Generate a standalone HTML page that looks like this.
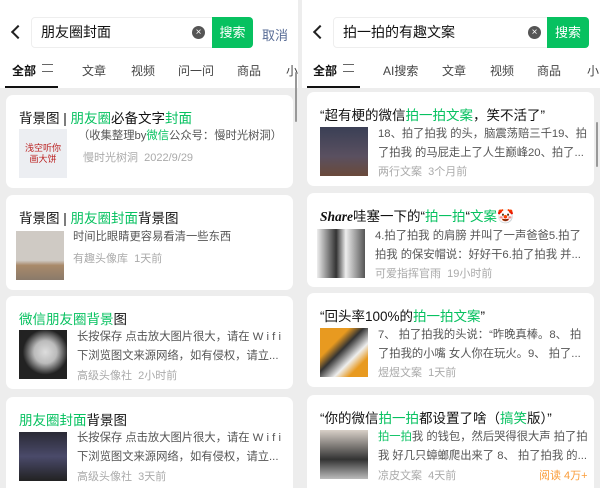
<!DOCTYPE html>
<html><head><meta charset="utf-8"><style>
*{margin:0;padding:0;box-sizing:border-box}
body{width:600px;height:488px;overflow:hidden;background:#ededed;font-family:"Liberation Sans","Noto Sans CJK SC",sans-serif;position:relative}
.p{position:absolute;top:0;height:488px;background:#ededed;overflow:hidden}
.hd{position:absolute;left:0;top:0;width:100%;height:88px;background:#fff}
.back{position:absolute;left:12px;top:27px;width:10px;height:10px;border-left:2px solid #222;border-bottom:2px solid #222;transform:rotate(45deg)}
.sb{position:absolute;top:17px;height:31px;background:#fff;border:1px solid #eee;border-radius:4px;font-size:14px;color:#111;line-height:29px;padding-left:9px}
.x{position:absolute;top:8px;width:13px;height:13px;border-radius:50%;background:#555;color:#fff;font-size:10px;line-height:13px;text-align:center}
.btn{position:absolute;top:17px;height:31px;background:#07c160;color:#fff;font-size:13px;line-height:31px;text-align:center;border-radius:0 4px 4px 0}
.tabs{position:absolute;top:62px;left:0;width:100%;font-size:12px;color:#444;white-space:nowrap}
.tabs span{position:absolute}
.ul{position:absolute;top:86px;height:2px;width:53px;background:#111}
.card{position:absolute;background:#fff;border-radius:7px}
.t{position:absolute;left:13px;top:12px;font-size:13.5px;color:#111;white-space:nowrap}
.g{color:#07c160}
.img{position:absolute;left:13px;width:48px;height:49px}
.d{position:absolute;left:71px;width:210px;font-size:11.3px;color:#555;line-height:19px;white-space:nowrap}
.d div{overflow:hidden;width:210px;text-overflow:ellipsis}
.m{position:absolute;left:71px;font-size:11px;color:#aaa;white-space:nowrap}
.scr{position:absolute;width:2px;background:#999;border-radius:1px}
.fl{display:inline-block;width:11px;height:8px;border-top:1.5px solid #666;border-bottom:1.5px solid #666;position:relative;top:-1px}
</style></head><body>
<div class="p" style="left:0;width:298px">
 <div class="hd"></div>
 <div class="back" style="left:13px"></div>
 <div class="sb" style="left:31px;width:190px">朋友圈封面<div class="x" style="left:160px">×</div></div>
 <div class="btn" style="left:212px;width:41px">搜索</div>
 <div style="position:absolute;left:262px;top:25px;font-size:13px;color:#576b95">取消</div>
 <div class="tabs"><span style="left:12px;color:#111;font-weight:bold">全部</span><span style="left:42px"><i class="fl"></i></span><span style="left:82px">文章</span><span style="left:131px">视频</span><span style="left:178px">问一问</span><span style="left:237px">商品</span><span style="left:286px">小</span></div>
 <div class="ul" style="left:5px"></div>
 <div class="scr" style="left:295px;top:72px;height:50px"></div>
 <div class="card" style="left:6px;top:95px;width:287px;height:93px">
  <div class="t">背景图 | <span class="g">朋友圈</span>必备文字<span class="g">封面</span></div>
  <div class="img" style="top:34px;background:#eceef2;color:#b22;font-size:9px;text-align:center;padding-top:14px;line-height:11px">浅空听你<br>画大饼</div>
  <div class="d" style="top:32px;left:72px">（收集整理by<span class="g">微信</span>公众号：慢时光树洞）</div>
  <div class="m" style="top:54px;left:77px">慢时光树洞&nbsp;&nbsp;2022/9/29</div>
 </div>
 <div class="card" style="left:6px;top:195px;width:287px;height:95px">
  <div class="t" style="top:12px">背景图 | <span class="g">朋友圈封面</span>背景图</div>
  <div class="img" style="top:36px;left:10px;background:linear-gradient(#cfcac4 60%,#a98a6a 70%,#8a7a6a)"></div>
  <div class="d" style="top:33px;left:67px">时间比眼睛更容易看清一些东西</div>
  <div class="m" style="top:55px;left:67px">有趣头像库&nbsp;&nbsp;1天前</div>
 </div>
 <div class="card" style="left:6px;top:296px;width:287px;height:93px">
  <div class="t"><span class="g">微信朋友圈背景</span>图</div>
  <div class="img" style="top:34px;background:radial-gradient(circle at 55% 45%,#ddd 0,#bbb 30%,#222 60%)"></div>
  <div class="d" style="top:32px"><div>长按保存 点击放大图片很大，请在 W i f i</div><div>下浏览图文来源网络，如有侵权，请立...</div></div>
  <div class="m" style="top:71px">高级头像社&nbsp;&nbsp;2小时前</div>
 </div>
 <div class="card" style="left:6px;top:397px;width:287px;height:100px">
  <div class="t"><span class="g">朋友圈封面</span>背景图</div>
  <div class="img" style="top:35px;background:linear-gradient(#2a2a35,#4a4a6a 50%,#222)"></div>
  <div class="d" style="top:32px"><div>长按保存 点击放大图片很大，请在 W i f i</div><div>下浏览图文来源网络，如有侵权，请立...</div></div>
  <div class="m" style="top:71px">高级头像社&nbsp;&nbsp;3天前</div>
 </div>
</div>
<div class="p" style="left:302px;width:298px">
 <div class="hd"></div>
 <div class="back" style="left:13px"></div>
 <div class="sb" style="left:31px;width:230px">拍一拍的有趣文案<div class="x" style="left:194px">×</div></div>
 <div class="btn" style="left:245px;width:42px">搜索</div>
 <div class="tabs"><span style="left:11px;color:#111;font-weight:bold">全部</span><span style="left:41px"><i class="fl"></i></span><span style="left:81px">AI搜索</span><span style="left:140px">文章</span><span style="left:188px">视频</span><span style="left:235px">商品</span><span style="left:285px">小</span></div>
 <div class="ul" style="left:5px"></div>
 <div class="card" style="left:5px;top:92px;width:287px;height:94px">
  <div class="t">“超有梗的微信<span class="g">拍一拍文案</span>，笑不活了”</div>
  <div class="img" style="top:35px;left:13px;background:linear-gradient(#3a3f55,#5a5060 60%,#6a4a3a)"></div>
  <div class="d" style="top:33px"><div>18、拍了拍我 的头，脑震荡赔三千19、拍</div><div>了拍我 的马屁走上了人生巅峰20、拍了...</div></div>
  <div class="m" style="top:71px">两行文案&nbsp;&nbsp;3个月前</div>
 </div>
 <div class="card" style="left:5px;top:193px;width:287px;height:94px">
  <div class="t"><i style="font-family:'Liberation Serif',serif;font-weight:bold">Share</i>哇塞一下的“<span class="g">拍一拍</span>“<span class="g">文案</span>🤡</div>
  <div class="img" style="top:36px;left:10px;background:linear-gradient(90deg,#eee,#333 40%,#eee 60%,#555)"></div>
  <div class="d" style="top:34px;left:68px"><div>4.拍了拍我 的肩膀 并叫了一声爸爸5.拍了</div><div>拍我 的保安帽说：好好干6.拍了拍我 并...</div></div>
  <div class="m" style="top:72px;left:68px">可爱指挥官雨&nbsp;&nbsp;19小时前</div>
 </div>
 <div class="card" style="left:5px;top:293px;width:287px;height:94px">
  <div class="t">“回头率100%的<span class="g">拍一拍文案</span>”</div>
  <div class="img" style="top:35px;left:13px;background:linear-gradient(135deg,#e89a20 30%,#333 45%,#eee 65%,#e89a20 80%)"></div>
  <div class="d" style="top:33px"><div>7、 拍了拍我的头说：“昨晚真棒。8、 拍</div><div>了拍我的小嘴 女人你在玩火。9、 拍了...</div></div>
  <div class="m" style="top:71px">煜煜文案&nbsp;&nbsp;1天前</div>
 </div>
 <div class="card" style="left:5px;top:395px;width:287px;height:100px">
  <div class="t">“你的微信<span class="g">拍一拍</span>都设置了啥（<span class="g">搞笑</span>版）”</div>
  <div class="img" style="top:35px;left:13px;background:linear-gradient(#d8d0c8,#333 60%,#bbb)"></div>
  <div class="d" style="top:33px"><div><span class="g">拍一拍</span>我 的钱包，然后哭得很大声 拍了拍</div><div>我 好几只蟑螂爬出来了 8、 拍了拍我 的...</div></div>
  <div class="m" style="top:72px">凉皮文案&nbsp;&nbsp;4天前</div>
  <div style="position:absolute;left:232px;top:72px;font-size:11px;color:#fa9d3b">阅读 4万+</div>
 </div>
 <div class="scr" style="left:294px;top:122px;height:45px"></div>
</div>
</body></html>
